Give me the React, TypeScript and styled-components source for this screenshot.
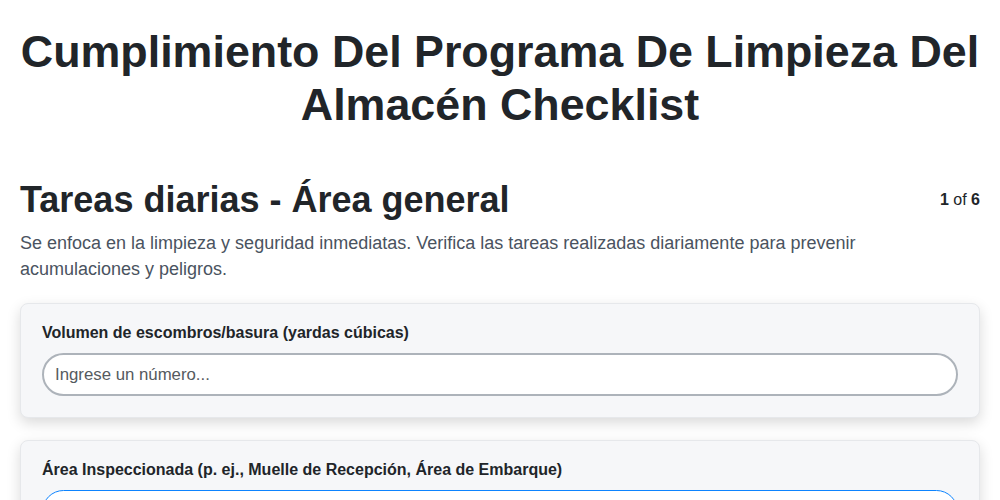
import { createGlobalStyle, styled } from "styled-components";

const GlobalStyle = createGlobalStyle`
  body {
    margin: 0;
    background: #ffffff;
    font-family: "Liberation Sans", Arial, sans-serif;
    color: #212529;
  }
`;

const Page = styled.div`
  padding: 25px 20px 40px;
`;

const Title = styled.h1`
  margin: 0 0 47px;
  font-size: 44.8px;
  line-height: 53px;
  font-weight: 700;
  text-align: center;
  color: #212529;
`;

const SectionHeader = styled.div`
  display: flex;
  justify-content: space-between;
  align-items: flex-start;
`;

const SectionTitle = styled.h2`
  margin: 0;
  font-size: 36px;
  line-height: 43px;
  font-weight: 700;
  color: #212529;
`;

const Pager = styled.div`
  font-size: 16px;
  line-height: 43px;
  color: #212529;

  b {
    font-weight: 700;
  }
`;

const Description = styled.p`
  max-width: 900px;
  margin: 9px 0 21px;
  font-size: 18px;
  line-height: 26px;
  color: #4a5360;
`;

const Card = styled.div`
  background: #f6f7f9;
  border: 1px solid #e6e8eb;
  border-radius: 8px;
  box-shadow: 0 5px 14px rgba(0, 0, 0, 0.15);
  padding: 19px 21px 21px;
  margin-bottom: 22px;
`;

const Label = styled.label`
  display: block;
  font-size: 16px;
  line-height: 20px;
  font-weight: 700;
  color: #212529;
  margin-bottom: 10px;
`;

const Input = styled.input<{ $focused?: boolean }>`
  box-sizing: border-box;
  width: 100%;
  height: 43px;
  padding: 0 11px;
  border: ${(p) => (p.$focused ? "1px solid #0d84ff" : "2px solid #adb3ba")};
  border-radius: 22px;
  background: #ffffff;
  font-family: "Liberation Sans", Arial, sans-serif;
  font-size: 16.8px;
  color: #212529;
  outline: none;

  &::placeholder {
    color: #555a60;
  }
`;

export default function App() {
  return (
    <>
      <GlobalStyle />
      <Page>
        <Title>Cumplimiento Del Programa De Limpieza Del Almacén Checklist</Title>
        <SectionHeader>
          <SectionTitle>Tareas diarias - Área general</SectionTitle>
          <Pager>
            <b>1</b> of <b>6</b>
          </Pager>
        </SectionHeader>
        <Description>
          Se enfoca en la limpieza y seguridad inmediatas. Verifica las tareas realizadas diariamente para prevenir
          acumulaciones y peligros.
        </Description>
        <Card>
          <Label>Volumen de escombros/basura (yardas cúbicas)</Label>
          <Input type="text" placeholder="Ingrese un número..." />
        </Card>
        <Card>
          <Label>Área Inspeccionada (p. ej., Muelle de Recepción, Área de Embarque)</Label>
          <Input type="text" $focused />
        </Card>
      </Page>
    </>
  );
}
